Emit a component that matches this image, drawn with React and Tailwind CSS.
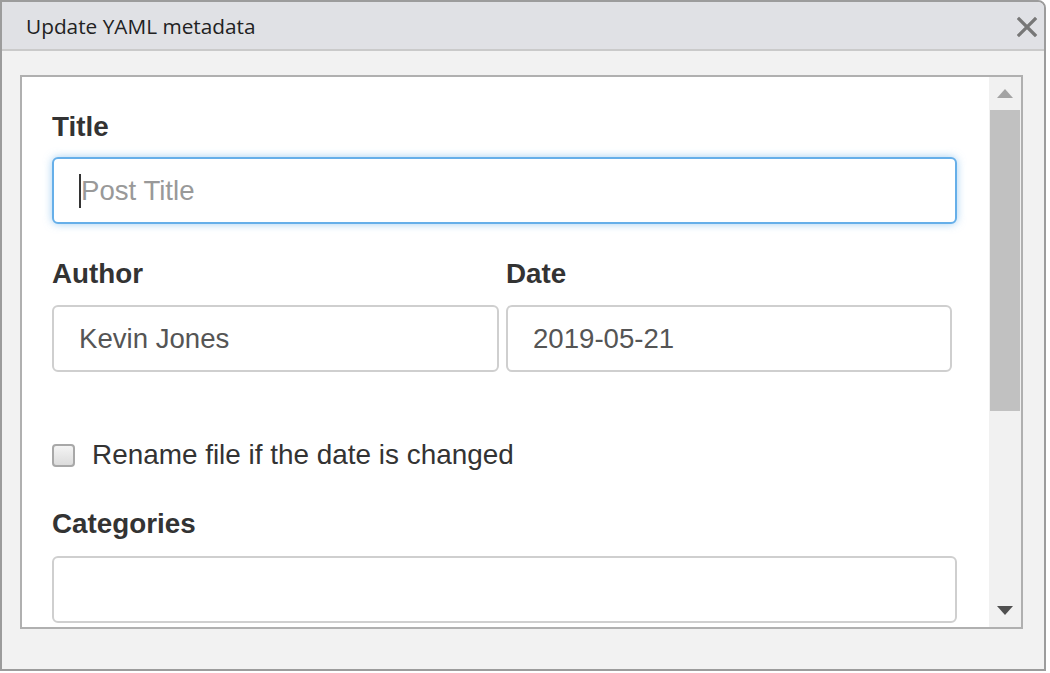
export default function App() {
  const labelCls = "text-[27.8px] leading-[32px] font-bold text-[#333]";
  const inputCls =
    "h-[67px] rounded-[6px] border-2 border-[#cfcfcf] bg-white pl-[25px] flex items-center text-[27.6px] text-[#555]";

  return (
    <div
      className="w-[1050px] h-[673px] bg-white overflow-hidden"
      style={{ fontFamily: '"Liberation Sans", Arial, sans-serif' }}
    >
      <div className="w-[1046px] h-[671px] border-2 border-[#9c9c9c] rounded-tr-[8px] flex flex-col bg-[#f2f2f2] overflow-hidden">
        {/* Header */}
        <div className="h-[49px] shrink-0 bg-[#e0e1e5] border-b-2 border-[#cacaca] flex items-center justify-between pl-[24px] pr-[6px]">
          <span
            className="text-[20.8px] text-[#222] pt-[2px]"
            style={{ fontFamily: '"Open Sans", "Noto Sans", sans-serif' }}
          >
            Update YAML metadata
          </span>
          <svg width="22" height="22" viewBox="0 0 22 22" className="mt-[2px]">
            <path d="M3 3 L19 19 M19 3 L3 19" stroke="#777" strokeWidth="3.2" strokeLinecap="square" />
          </svg>
        </div>

        {/* Body */}
        <div className="flex-1 pt-[24px] pl-[18px] pr-[21px] pb-[40px]">
          <div className="h-full border-2 border-[#b0b0b0] bg-white flex overflow-hidden">
            {/* Form content */}
            <div className="flex-1 pt-[34px] pl-[30px] pr-[32px]">
              <div className={labelCls}>Title</div>
              <div className="mt-[14px] h-[67px] rounded-[6px] border-2 border-[#66afe9] bg-white pl-[25px] flex items-center text-[27.6px] text-[#999] shadow-[0_0_8px_rgba(102,175,233,0.6)]">
                <span className="w-[2px] h-[34px] bg-[#333]" />
                Post Title
              </div>

              <div className="mt-[34px] flex gap-[7px]">
                <div className="w-[447px]">
                  <div className={labelCls}>Author</div>
                  <div className={`mt-[15px] ${inputCls}`}>Kevin Jones</div>
                </div>
                <div className="w-[446px]">
                  <div className={labelCls}>Date</div>
                  <div className={`mt-[15px] ${inputCls}`}>2019-05-21</div>
                </div>
              </div>

              <div className="mt-[67px] h-[32px] flex items-center">
                <span className="w-[23px] h-[23px] rounded-[4px] border-2 border-[#a8a8a8] bg-gradient-to-b from-[#f4f4f4] to-[#dcdcdc]" />
                <span className="ml-[17px] text-[27.9px] text-[#333]">Rename file if the date is changed</span>
              </div>

              <div className={`mt-[37px] ${labelCls}`}>Categories</div>
              <div className={`mt-[16px] ${inputCls}`} />
            </div>

            {/* Scrollbar */}
            <div className="w-[32px] shrink-0 bg-[#f1f1f1] flex flex-col items-center">
              <div className="h-[33px] w-full flex items-center justify-center">
                <svg width="16" height="9" viewBox="0 0 16 9">
                  <path d="M8 0 L16 9 L0 9 Z" fill="#a3a3a3" />
                </svg>
              </div>
              <div className="w-[30px] h-[301px] bg-[#c1c1c1]" />
              <div className="flex-1" />
              <div className="h-[33px] w-full flex items-center justify-center">
                <svg width="16" height="9" viewBox="0 0 16 9">
                  <path d="M0 0 L16 0 L8 9 Z" fill="#505050" />
                </svg>
              </div>
            </div>
          </div>
        </div>
      </div>
    </div>
  );
}
